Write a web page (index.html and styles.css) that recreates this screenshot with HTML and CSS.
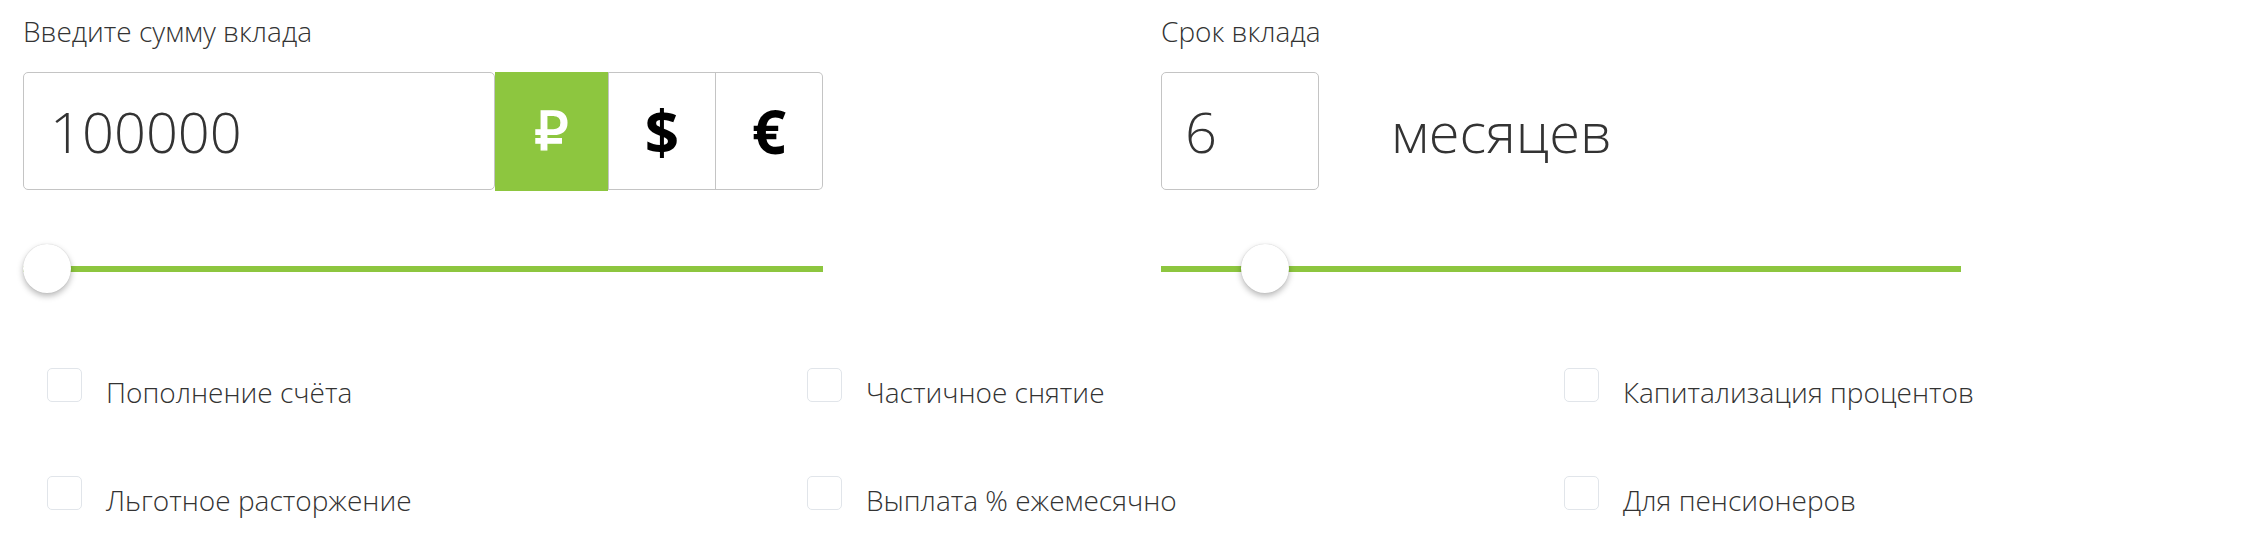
FILE: index.html
```html
<!DOCTYPE html>
<html lang="ru">
<head>
<meta charset="utf-8">
<title>Калькулятор вклада</title>
<link rel="stylesheet" href="styles.css">
</head>
<body>
<div class="calc">
  <div class="top">
    <div class="field">
      <div class="label">Введите сумму вклада</div>
      <div class="input-row">
        <div class="amount">100000</div>
        <div class="currencies">
          <div class="cur cur-active">₽</div>
          <div class="cur">$</div>
          <div class="cur cur-last">€</div>
        </div>
      </div>
      <div class="slider">
        <div class="track"></div>
        <div class="knob" style="left: 0px"></div>
      </div>
    </div>
    <div class="field">
      <div class="label">Срок вклада</div>
      <div class="input-row">
        <div class="term">6</div>
        <div class="unit">месяцев</div>
      </div>
      <div class="slider">
        <div class="track"></div>
        <div class="knob" style="left: 80px"></div>
      </div>
    </div>
  </div>
  <div class="options">
    <label class="opt"><span class="box"></span><span class="opt-text">Пополнение счёта</span></label>
    <label class="opt"><span class="box"></span><span class="opt-text">Частичное снятие</span></label>
    <label class="opt"><span class="box"></span><span class="opt-text">Капитализация процентов</span></label>
    <label class="opt"><span class="box"></span><span class="opt-text">Льготное расторжение</span></label>
    <label class="opt"><span class="box"></span><span class="opt-text">Выплата % ежемесячно</span></label>
    <label class="opt"><span class="box"></span><span class="opt-text">Для пенсионеров</span></label>
  </div>
</div>
</body>
</html>
```
FILE: styles.css
```css
* { box-sizing: border-box; }
body {
  margin: 0;
  background: #fff;
  font-family: "Open Sans", "DejaVu Sans", sans-serif;
  font-weight: 300;
  color: #333;
}
.calc {
  padding: 12px 0 0 23px;
}
.top {
  display: grid;
  grid-template-columns: 1138px 1138px;
}
.field {
  width: 800px;
}
.label {
  font-size: 28px;
  line-height: 38px;
  color: #333;
  margin-bottom: 22px;
}
.input-row {
  display: flex;
  height: 118px;
  align-items: stretch;
}
.amount {
  width: 473px;
  border: 1.5px solid #c4c4c4;
  border-radius: 5px;
  font-size: 56px;
  display: flex;
  align-items: center;
  padding-left: 26px;
  color: #333;
}
.currencies {
  display: flex;
  flex: 1;
  border: 1.5px solid #c4c4c4;
  border-left: none;
  border-radius: 0 5px 5px 0;
}
.cur {
  width: 107px;
  display: flex;
  align-items: center;
  justify-content: center;
  font-family: "Open Sans", sans-serif;
  font-weight: 700;
  font-size: 60px;
  color: #000;
  border-left: 1.5px solid #c4c4c4;
}
.cur-active {
  width: 113px;
  border-left: none;
  background: #8dc63f;
  color: #fff;
  margin: -1.5px 0;
  font-family: "DejaVu Sans", sans-serif;
  font-weight: 400;
  font-size: 54px;
  -webkit-text-stroke: 1.4px #fff;
}
.cur-last {
  flex: 1;
}
.term {
  width: 158px;
  border: 1.5px solid #c4c4c4;
  border-radius: 5px;
  font-size: 56px;
  display: flex;
  align-items: center;
  padding-left: 23px;
  color: #333;
}
.unit {
  display: flex;
  align-items: center;
  margin-left: 72px;
  font-size: 56px;
  color: #333;
}
.slider {
  position: relative;
  height: 49px;
  margin-top: 54px;
  display: flex;
  align-items: center;
}
.track {
  width: 100%;
  height: 6px;
  background: #8dc63f;
}
.knob {
  position: absolute;
  top: 0;
  width: 48px;
  height: 49px;
  border-radius: 50%;
  background: #fff;
  box-shadow: 0 3px 6px rgba(0, 0, 0, 0.28), 0 0 1px rgba(0, 0, 0, 0.2);
}
.options {
  display: grid;
  grid-template-columns: 760px 757px 600px;
  row-gap: 65px;
  padding-left: 24px;
  margin-top: 75px;
}
.opt {
  display: flex;
  align-items: flex-start;
}
.box {
  width: 35px;
  height: 34px;
  border: 1.5px solid #e1e5ea;
  border-radius: 5px;
  flex: none;
}
.opt-text {
  margin-left: 24px;
  margin-top: 5px;
  font-size: 28px;
  line-height: 38px;
  color: #333;
}
```
